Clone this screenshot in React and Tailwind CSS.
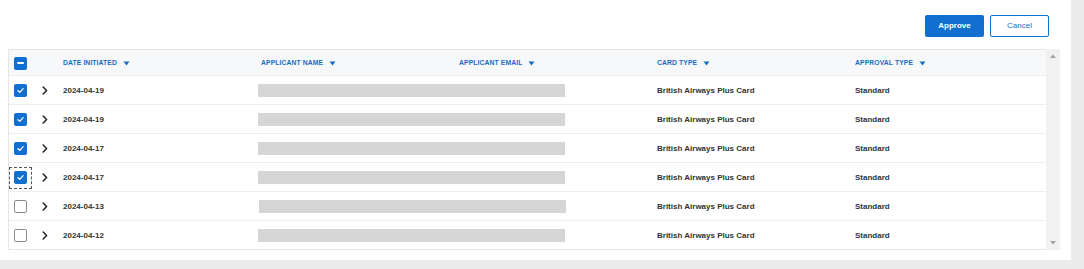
import React from 'react';

const rows = [
  { date: '2024-04-19', checked: true },
  { date: '2024-04-19', checked: true },
  { date: '2024-04-17', checked: true },
  { date: '2024-04-17', checked: true, focused: true },
  { date: '2024-04-13', checked: false, shift: true },
  { date: '2024-04-12', checked: false },
];

const columns = ['DATE INITIATED', 'APPLICANT NAME', 'APPLICANT EMAIL', 'CARD TYPE', 'APPROVAL TYPE'];

const Checkbox = ({ checked, indeterminate }) => {
  if (indeterminate) {
    return (
      <span className="w-[13px] h-[13px] rounded-[2px] bg-[#1170cf] flex items-center justify-center">
        <span className="w-[7px] h-[2px] bg-white rounded-full" />
      </span>
    );
  }
  if (checked) {
    return (
      <span className="w-[13px] h-[13px] rounded-[2px] bg-[#1170cf] flex items-center justify-center">
        <svg width="9" height="9" viewBox="0 0 10 10" fill="none">
          <path d="M2.2 5.2 L4.2 7.1 L7.9 3" stroke="white" strokeWidth="1.4" strokeLinecap="round" strokeLinejoin="round" />
        </svg>
      </span>
    );
  }
  return <span className="w-[13px] h-[13px] rounded-[2px] bg-white border border-[#8c8c8c]" />;
};

const Chevron = () => (
  <svg width="6" height="9" viewBox="0 0 6 9" fill="none">
    <path d="M1.2 1 L4.6 4.5 L1.2 8" stroke="#222" strokeWidth="1.5" strokeLinecap="round" strokeLinejoin="round" />
  </svg>
);

const SortArrow = () => (
  <svg width="7" height="5" viewBox="0 0 7 5" className="ml-[6px] shrink-0">
    <path d="M0.5 0.5 L6.5 0.5 L3.5 4.5 Z" fill="#1a6cc0" />
  </svg>
);

export default function App() {
  return (
    <div className="w-[1084px] h-[269px] flex bg-white overflow-hidden" style={{ fontFamily: '"Liberation Sans", Arial, sans-serif' }}>
      <div className="w-[1071px] flex flex-col">
        <div className="h-[260px] flex flex-col">
          {/* actions */}
          <div className="flex justify-end gap-[6px] pt-[15px] pr-[22px]">
            <button className="w-[59px] h-[22px] rounded-[2px] bg-[#1170cf] text-white text-[8px] font-bold">
              Approve
            </button>
            <button className="w-[59px] h-[22px] rounded-[2px] bg-white border border-[#1170cf] text-[#1170cf] text-[8px]">
              Cancel
            </button>
          </div>

          {/* table */}
          <div className="mt-[12px] ml-[8px] flex w-[1052px]">
            <div className="w-[1038px] border-l border-t border-b border-[#e6e6e6] bg-white">
              <div className="h-[26px] flex items-center pt-[1px] bg-[#f7f8fa] border-b border-[#eeeeee]">
                <div className="w-[54px] shrink-0 pl-[5px] flex items-center">
                  <Checkbox indeterminate />
                </div>
                {columns.map((c, i) => (
                  <div
                    key={c}
                    className={`${i === columns.length - 1 ? 'w-[190px]' : 'w-[198px]'} shrink-0 flex items-center text-[6.8px] font-bold text-[#1a6cc0] tracking-[0.1px]`}
                  >
                    {c}
                    <SortArrow />
                  </div>
                ))}
              </div>
              {rows.map((r, i) => (
                <div
                  key={i}
                  className={`flex items-center pt-[1px] ${i < rows.length - 1 ? 'h-[29px] border-b border-[#eeeeee]' : 'h-[28px]'}`}
                >
                  <div className="w-[54px] shrink-0 flex items-center">
                    {r.focused ? (
                      <span className="w-[23px] h-[22px] border border-dashed border-[#555] flex items-center justify-center">
                        <Checkbox checked={r.checked} />
                      </span>
                    ) : (
                      <span className="w-[23px] flex items-center justify-center">
                        <Checkbox checked={r.checked} />
                      </span>
                    )}
                    <span className="ml-[10px] flex items-center">
                      <Chevron />
                    </span>
                  </div>
                  <div className="w-[198px] shrink-0 text-[8px] font-bold text-[#333]">{r.date}</div>
                  <div className="w-[396px] shrink-0 flex items-center">
                    <span className={`h-[13px] w-[307px] bg-[#d6d6d6] ${r.shift ? 'ml-[-2px]' : 'ml-[-3px]'}`} />
                  </div>
                  <div className="w-[198px] shrink-0 text-[8px] font-bold text-[#333]">British Airways Plus Card</div>
                  <div className="w-[190px] shrink-0 text-[8px] font-bold text-[#333]">Standard</div>
                </div>
              ))}
            </div>

            {/* scrollbar */}
            <div className="w-[14px] bg-[#f1f1f1] flex flex-col items-center justify-between py-[5px]">
              <svg width="6" height="4" viewBox="0 0 6 4">
                <path d="M0 4 L3 0.5 L6 4 Z" fill="#a3a3a3" />
              </svg>
              <svg width="6" height="4" viewBox="0 0 6 4">
                <path d="M0 0 L3 3.5 L6 0 Z" fill="#a3a3a3" />
              </svg>
            </div>
          </div>
        </div>
        <div className="flex-1 bg-[#ececec]" />
      </div>
      <div className="flex-1 bg-[#ececec]" />
    </div>
  );
}
